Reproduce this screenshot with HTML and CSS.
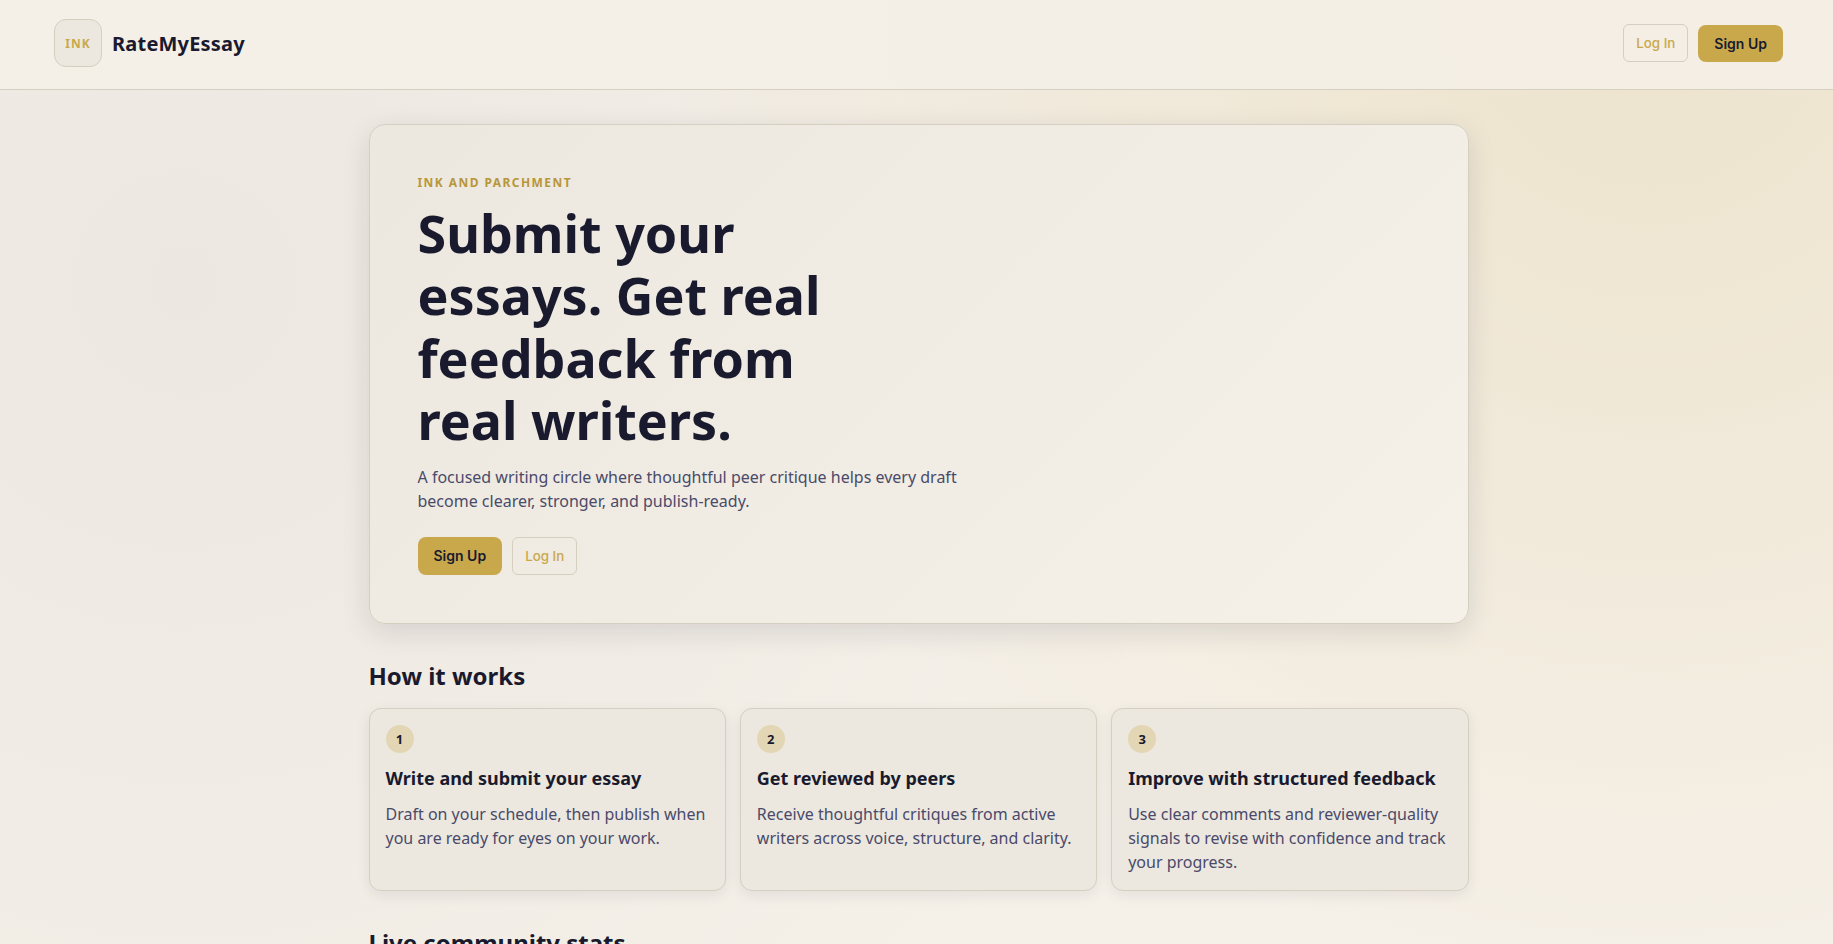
FILE: index.html
```html
<!DOCTYPE html>
<html lang="en">
<head>
<meta charset="utf-8">
<meta name="viewport" content="width=device-width, initial-scale=1">
<title>RateMyEssay</title>
<link rel="stylesheet" href="styles.css">
</head>
<body>
<header class="topbar">
  <a class="brand" href="#"><span class="brand-mark">INK</span><span class="brand-name">RateMyEssay</span></a>
  <nav class="actions" aria-label="Account">
    <button class="btn btn-ghost" type="button">Log In</button>
    <button class="btn btn-primary" type="button">Sign Up</button>
  </nav>
</header>
<main class="page">
  <section class="hero">
    <p class="eyebrow">Ink and Parchment</p>
    <h1 class="hero-title">Submit your essays. Get real feedback from real writers.</h1>
    <p class="hero-text">A focused writing circle where thoughtful peer critique helps every draft become clearer, stronger, and publish-ready.</p>
    <div class="actions hero-actions">
      <button class="btn btn-primary" type="button">Sign Up</button>
      <button class="btn btn-ghost" type="button">Log In</button>
    </div>
  </section>
  <section class="section">
    <h2 class="section-title">How it works</h2>
    <div class="steps">
      <article class="step">
        <span class="step-number">1</span>
        <h3 class="step-title">Write and submit your essay</h3>
        <p class="step-text">Draft on your schedule, then publish when you are ready for eyes on your work.</p>
      </article>
      <article class="step">
        <span class="step-number">2</span>
        <h3 class="step-title">Get reviewed by peers</h3>
        <p class="step-text">Receive thoughtful critiques from active writers across voice, structure, and clarity.</p>
      </article>
      <article class="step">
        <span class="step-number">3</span>
        <h3 class="step-title">Improve with structured feedback</h3>
        <p class="step-text">Use clear comments and reviewer-quality signals to revise with confidence and track your progress.</p>
      </article>
    </div>
  </section>
  <section class="section">
    <h2 class="section-title">Live community stats</h2>
  </section>
</main>
</body>
</html>
```
FILE: styles.css
```css
:root {
  --ink: #1a1a2e;
  --muted: #4a4a6a;
  --gold: #c9a84c;
  --line: #d4cfc0;
  --paper: #f5f0e8;
  --panel: #ece8df;
}

* { box-sizing: border-box; }

html { height: 100%; }

body {
  margin: 0;
  height: 100vh;
  overflow: hidden;
  color: var(--ink);
  font: 16px/1.5 "Noto Sans", sans-serif;
  background:
    radial-gradient(circle at 10% 30%, rgba(26, 26, 46, 0.04), transparent 60%),
    radial-gradient(circle at 90% 0%, rgba(201, 168, 76, 0.18), transparent 52%),
    var(--paper);
}

h1, h2, h3, p { margin: 0; }

.topbar {
  display: flex;
  align-items: center;
  justify-content: space-between;
  padding: 19px 50px 22px 54px;
  border-bottom: 1px solid var(--line);
  background: rgba(245, 240, 232, 0.85);
}

.brand {
  display: flex;
  align-items: center;
  gap: 10px;
  color: var(--ink);
  line-height: normal;
  text-decoration: none;
}

.brand-mark {
  display: grid;
  place-items: center;
  width: 48px;
  height: 48px;
  border: 1px solid var(--line);
  border-radius: 12px;
  background: var(--panel);
  color: var(--gold);
  font-size: 12px;
  font-weight: 700;
  letter-spacing: 1px;
}

.brand-name { font-size: 20px; font-weight: 700; letter-spacing: 0.01em; }

.actions { display: flex; align-items: center; gap: 10px; }

.btn {
  border-radius: 8px;
  font-family: Inter, sans-serif;
  cursor: pointer;
}

.btn-primary {
  padding: 8px 16px;
  border: 0;
  background: var(--gold);
  color: var(--ink);
  font-size: 14px;
  line-height: 21px;
  font-weight: 600;
}

.btn-ghost {
  padding: 8px 12px;
  border: 1px solid var(--line);
  border-radius: 6px;
  background: transparent;
  color: var(--gold);
  line-height: 20px;
  font-weight: 500;
}

.page {
  max-width: 1104px;
  margin: 0 auto;
  padding: 34px 0 0 4px;
}

.hero {
  padding: 48px;
  border: 1px solid var(--line);
  border-radius: 16px;
  background: linear-gradient(135deg, var(--panel), var(--paper));
  box-shadow: 0 8px 28px rgba(26, 26, 46, 0.12);
}

.eyebrow {
  color: #b8963a;
  font-size: 12px;
  line-height: 20px;
  font-weight: 700;
  letter-spacing: 0.12em;
  text-transform: uppercase;
}

.hero-title {
  max-width: 440px;
  margin-top: 9px;
  font-size: 52px;
  line-height: 1.2;
  font-weight: 700;
}

.hero-text { max-width: 560px; margin-top: 13px; color: var(--muted); }

.hero-actions { align-items: stretch; margin-top: 24px; }

.section { margin-top: 34px; }

.section-title { font-size: 24px; line-height: 36px; font-weight: 700; }

.steps {
  display: grid;
  grid-template-columns: repeat(3, 1fr);
  gap: 14px;
  margin-top: 14px;
}

.step {
  padding: 16px;
  border: 1px solid var(--line);
  border-radius: 12px;
  background: var(--panel);
  box-shadow: 0 4px 14px rgba(26, 26, 46, 0.08);
}

.step-number {
  display: grid;
  place-items: center;
  width: 28px;
  height: 28px;
  border-radius: 50%;
  background: #e3d6b4;
  font-size: 13px;
  line-height: normal;
  font-weight: 700;
}

.step-title { margin-top: 12px; font-size: 18px; line-height: 27px; font-weight: 700; }

.step-text { margin-top: 10px; color: var(--muted); }
```
